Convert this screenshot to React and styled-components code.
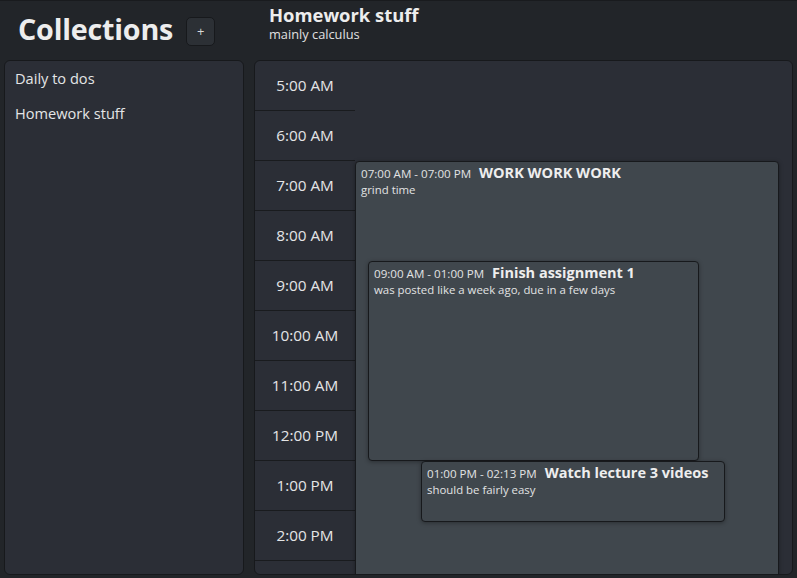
import React from 'react';
import styled, { createGlobalStyle } from 'styled-components';

const GlobalStyle = createGlobalStyle`
  * { box-sizing: border-box; }
  body {
    margin: 0;
    background: #222529;
    color: #e4e5e6;
    font-family: "Open Sans", "Noto Sans", sans-serif;
    overflow: hidden;
  }
`

const Page = styled.div`
  display: grid;
  grid-template-columns: 240px 539px;
  grid-template-rows: 59px 515px;
  column-gap: 10px;
  padding: 0 4px;
  height: 578px;
  border-top: 1px solid #191b1e;
`

const SideHeader = styled.div`
  display: flex;
  align-items: center;
  padding: 0 0 5px 14px;
  gap: 13px;
`

const Title = styled.h1`
  margin: 0;
  font-size: 28.7px;
  font-weight: 700;
  letter-spacing: -0.2px;
  color: #ededed;
`

const AddButton = styled.button`
  width: 29px;
  height: 29px;
  margin-top: 6px;
  border: 1px solid #17191c;
  border-radius: 5px;
  background: #2c3035;
  color: #d8d8d8;
  font-family: inherit;
  font-size: 13px;
  padding: 0;
`

const MainHeader = styled.div`
  display: flex;
  flex-direction: column;
  padding: 3px 0 0 15px;
`

const CollectionTitle = styled.h2`
  margin: 0;
  font-size: 18.4px;
  line-height: 22px;
  font-weight: 700;
  color: #ededed;
`

const Subtitle = styled.div`
  font-size: 12.8px;
  line-height: 16px;
  color: #e0e0e0;
`

const Panel = styled.div`
  background: #2b2e36;
  border: 1px solid #17191c;
  border-radius: 6px;
  overflow: hidden;
`

const List = styled(Panel)`
  display: flex;
  flex-direction: column;
  padding: 7px 10px;
  gap: 15px;
`

const ListItem = styled.div`
  font-size: 14.6px;
  line-height: 20px;
  color: #e4e5e6;
`

const Calendar = styled(Panel)`
  display: flex;
  align-items: flex-start;
`

const TimeColumn = styled.div`
  width: 100px;
  flex: none;
`

const TimeRow = styled.div`
  height: 50px;
  display: flex;
  align-items: center;
  justify-content: center;
  padding-bottom: 2px;
  border-bottom: 1px solid #191b1e;
  font-size: 15.3px;
  color: #e4e5e6;
`

const Track = styled.div`
  position: relative;
  flex: 1;
  align-self: stretch;
`

const Event = styled.div`
  position: absolute;
  background: #40474d;
  border: 1px solid #17191c;
  border-radius: 4px;
  padding: 1px 5px 0;
  box-shadow: 0 1px 4px rgba(0, 0, 0, 0.35);
  overflow: hidden;
`

const EventHead = styled.div`
  display: flex;
  align-items: baseline;
  gap: 8px;
  line-height: 19px;
`

const Range = styled.span`
  font-size: 11.6px;
  color: #e2e3e4;
`

const EventName = styled.span`
  font-size: 14.5px;
  font-weight: 700;
  color: #eeeeee;
`

const EventNote = styled.div`
  font-size: 11.4px;
  line-height: 14px;
  color: #e2e3e4;
`

const hours = ['5:00 AM', '6:00 AM', '7:00 AM', '8:00 AM', '9:00 AM', '10:00 AM', '11:00 AM',
  '12:00 PM', '1:00 PM', '2:00 PM', '3:00 PM', '4:00 PM', '5:00 PM', '6:00 PM', '7:00 PM']

const events = [
  { range: '07:00 AM - 07:00 PM', name: 'WORK WORK WORK', note: 'grind time', left: 0, top: 100, width: 424, height: 600 },
  { range: '09:00 AM - 01:00 PM', name: 'Finish assignment 1', note: 'was posted like a week ago, due in a few days', left: 13, top: 200, width: 331, height: 200 },
  { range: '01:00 PM - 02:13 PM', name: 'Watch lecture 3 videos', note: 'should be fairly easy', left: 66, top: 400, width: 304, height: 61 },
]

export default function App() {
  return (
    <>
      <GlobalStyle />
      <Page>
        <SideHeader>
          <Title>Collections</Title>
          <AddButton>+</AddButton>
        </SideHeader>
        <MainHeader>
          <CollectionTitle>Homework stuff</CollectionTitle>
          <Subtitle>mainly calculus</Subtitle>
        </MainHeader>
        <List>
          <ListItem>Daily to dos</ListItem>
          <ListItem>Homework stuff</ListItem>
        </List>
        <Calendar>
          <TimeColumn>
            {hours.map(h => <TimeRow key={h}>{h}</TimeRow>)}
          </TimeColumn>
          <Track>
            {events.map(e => (
              <Event key={e.name} style={{ left: e.left, top: e.top, width: e.width, height: e.height }}>
                <EventHead>
                  <Range>{e.range}</Range>
                  <EventName>{e.name}</EventName>
                </EventHead>
                <EventNote>{e.note}</EventNote>
              </Event>
            ))}
          </Track>
        </Calendar>
      </Page>
    </>
  );
}
